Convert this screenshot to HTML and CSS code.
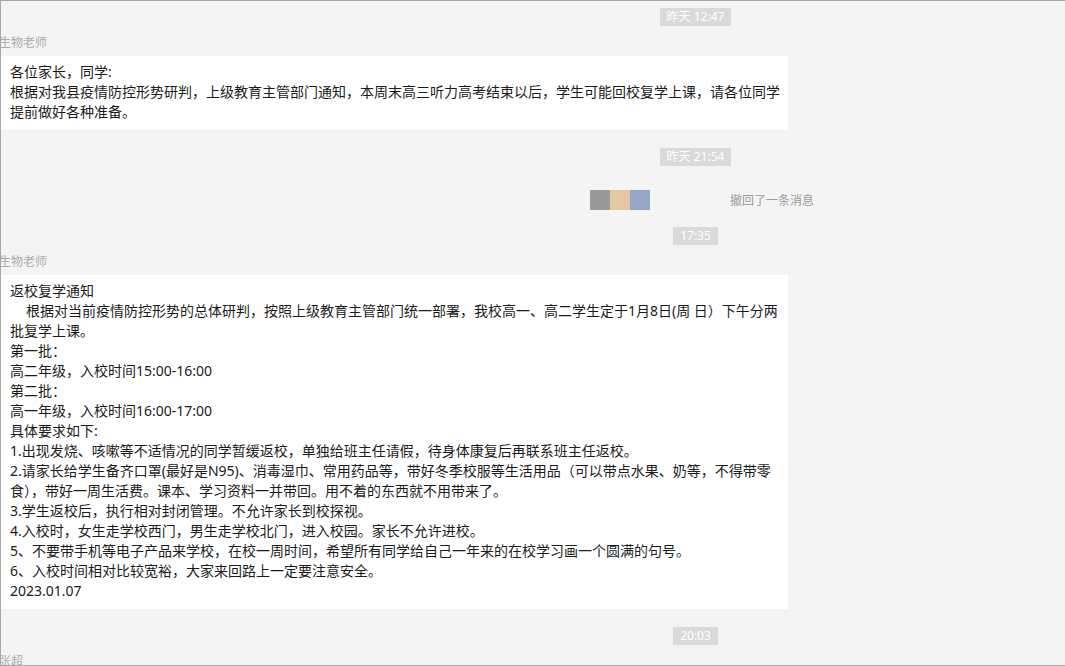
FILE: index.html
```html
<!DOCTYPE html>
<html lang="zh-CN">
<head>
<meta charset="utf-8">
<title>聊天记录</title>
<link rel="stylesheet" href="styles.css">
</head>
<body>
<div class="window">
  <div class="chat">
    <div class="stamp-row first"><span class="stamp">昨天 12:47</span></div>
    <div class="sender">生物老师</div>
    <div class="bubble">各位家长，同学:<br>根据对我县疫情防控形势研判，上级教育主管部门通知，本周末高三听力高考结束以后，学生可能回校复学上课，请各位同学<br>提前做好各种准备。</div>

    <div class="stamp-row"><span class="stamp">昨天 21:54</span></div>
    <div class="recall-row">
      <div class="swatches">
        <span class="sw sw-gray"></span><span class="sw sw-peach"></span><span class="sw sw-blue"></span>
      </div>
      <span class="recall-text">撤回了一条消息</span>
    </div>

    <div class="stamp-row tight"><span class="stamp">17:35</span></div>
    <div class="sender">生物老师</div>
    <div class="bubble">返校复学通知<br><span class="indent">根据对当前疫情防控形势的总体研判，按照上级教育主管部门统一部署，我校高一、高二学生定于1月8日(周 日）下午分两</span><br>批复学上课。<br>第一批：<br>高二年级，入校时间15:00-16:00<br>第二批：<br>高一年级，入校时间16:00-17:00<br>具体要求如下:<br>1.出现发烧、咳嗽等不适情况的同学暂缓返校，单独给班主任请假，待身体康复后再联系班主任返校。<br>2.请家长给学生备齐口罩(最好是N95)、消毒湿巾、常用药品等，带好冬季校服等生活用品（可以带点水果、奶等，不得带零<br>食），带好一周生活费。课本、学习资料一并带回。用不着的东西就不用带来了。<br>3.学生返校后，执行相对封闭管理。不允许家长到校探视。<br>4.入校时，女生走学校西门，男生走学校北门，进入校园。家长不允许进校。<br>5、不要带手机等电子产品来学校，在校一周时间，希望所有同学给自己一年来的在校学习画一个圆满的句号。<br>6、入校时间相对比较宽裕，大家来回路上一定要注意安全。<br>2023.01.07</div>

    <div class="stamp-row"><span class="stamp">20:03</span></div>
    <div class="sender">张超</div>
  </div>
</div>
</body>
</html>
```

FILE: styles.css
```css
* { box-sizing: border-box; }

html, body {
  margin: 0;
  padding: 0;
  background: #f4f4f4;
  overflow: hidden;
}

body {
  font-family: "Noto Sans", "Noto Sans CJK SC", sans-serif;
  color: #1b1b1b;
}

.window {
  width: 1065px;
  height: 666px;
  border-top: 1px solid #a8a8a8;
  border-left: 1px solid #a8a8a8;
  border-bottom: 1px solid #a8a8a8;
  background: #f4f4f4;
  overflow: hidden;
}

.chat {
  width: 1389px;
  display: flex;
  flex-direction: column;
  align-items: flex-start;
}

.stamp-row {
  width: 1389px;
  display: flex;
  justify-content: center;
  margin-top: 18px;
}

.stamp-row.first { margin-top: 7px; }
.stamp-row.tight { margin-top: 17px; }

.stamp {
  display: block;
  height: 18px;
  line-height: 18px;
  padding: 0 7px;
  background: #dadada;
  color: #ffffff;
  font-size: 12px;
  white-space: nowrap;
}

.sender {
  margin-top: 9px;
  margin-left: -2px;
  height: 16px;
  line-height: 16px;
  font-size: 12px;
  color: #ababab;
  white-space: nowrap;
}

.bubble {
  margin-top: 5px;
  width: 787px;
  padding: 6px 9px 8px 9px;
  background: #ffffff;
  font-size: 14px;
  line-height: 20px;
  white-space: nowrap;
  color: #1b1b1b;
}

.indent {
  padding-left: 16px;
}

.recall-row {
  margin-top: 24px;
  margin-left: 589px;
  display: flex;
  align-items: center;
  gap: 80px;
  height: 20px;
}

.swatches {
  display: flex;
}

.sw {
  display: block;
  width: 20px;
  height: 20px;
}

.sw-gray { background: #999999; }
.sw-peach { background: #e6c6a4; }
.sw-blue { background: #94a7c7; }

.recall-text {
  font-size: 12px;
  color: #9a9a9a;
  white-space: nowrap;
}
```
